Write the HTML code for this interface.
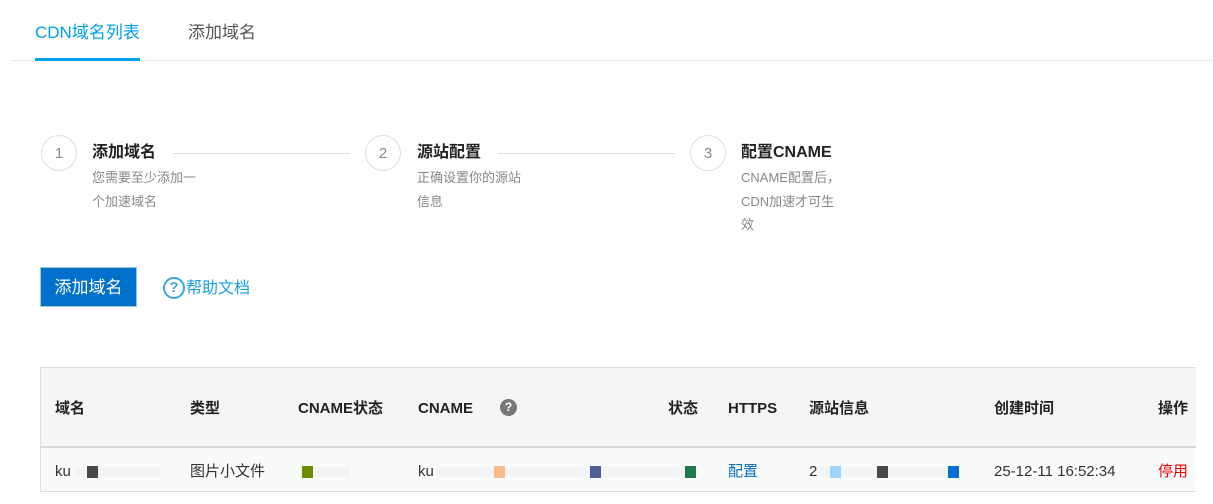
<!DOCTYPE html>
<html><head><meta charset="utf-8"><style>
body{margin:0;width:1213px;height:504px;background:#fff;position:relative;overflow:hidden;font-family:"Liberation Sans","Noto Sans CJK SC",sans-serif;}
.a{position:absolute;white-space:nowrap;line-height:20px;}
.circ{position:absolute;width:36px;height:36px;border:1px solid #ddd;border-radius:50%;box-sizing:border-box;display:flex;align-items:center;justify-content:center;color:#888;font-size:15px;background:#fff}
.t{font-weight:bold;font-size:16px;color:#222;top:143px;}
.d{font-size:13px;color:#888;line-height:23.5px;white-space:normal;width:112px;top:166px;word-break:break-all}
.ln{position:absolute;height:1px;background:#ddd;}
.h{font-weight:bold;font-size:15px;color:#222;top:399px;}
.r{font-size:15px;color:#333;top:462px;}
.sq{position:absolute;width:11px;height:12px;top:466px;}
.bl{position:absolute;height:10px;top:467px;background:#f3f4f6;}
</style></head><body>
<div class="a" style="left:35px;top:23px;font-size:17px;color:#00a0e9">CDN域名列表</div>
<div class="a" style="left:188px;top:23px;font-size:17px;color:#555">添加域名</div>
<div class="ln" style="left:11px;top:60px;width:1202px;background:#e8e8e8"></div>
<div class="a" style="left:35px;top:58px;width:105px;height:3px;background:#00a0e9"></div>

<div class="circ" style="left:41px;top:135px">1</div>
<div class="a t" style="left:92px">添加域名</div>
<div class="ln" style="left:173px;top:153px;width:177px"></div>
<div class="a d" style="left:92px">您需要至少添加一个加速域名</div>

<div class="circ" style="left:365px;top:135px">2</div>
<div class="a t" style="left:417px">源站配置</div>
<div class="ln" style="left:498px;top:153px;width:177px"></div>
<div class="a d" style="left:417px">正确设置你的源站信息</div>

<div class="circ" style="left:690px;top:135px">3</div>
<div class="a t" style="left:741px">配置CNAME</div>
<div class="a d" style="left:741px;width:100px;word-break:normal">CNAME配置后，CDN加速才可生效</div>

<div class="a" style="left:40px;top:267px;width:97px;height:40px;background:#0070cc;border:1px solid #9cc;box-sizing:border-box;color:#fff;font-size:17px;text-align:center;line-height:40px">添加域名</div>
<div class="a" style="left:163px;top:277px;width:22px;height:22px;border:2px solid #3aa8e0;border-radius:50%;box-sizing:border-box;color:#3aa8e0;font-size:15px;font-weight:bold;text-align:center;line-height:18px">?</div>
<div class="a" style="left:186px;top:279px;font-size:16px;color:#1a9ee0">帮助文档</div>

<div class="a" style="left:40px;top:367px;width:1156px;height:80px;background:#f4f5f7;border-top:1px solid #ddd;border-left:1px solid #ddd;box-sizing:border-box"></div>
<div class="a" style="left:40px;top:446px;width:1156px;height:2px;background:#d8d8d8"></div>
<div class="a" style="left:40px;top:448px;width:1156px;height:44px;background:#f9fafa;border-left:1px solid #ddd;border-bottom:1px solid #ddd;box-sizing:border-box"></div>

<div class="a h" style="left:55px">域名</div>
<div class="a h" style="left:190px">类型</div>
<div class="a h" style="left:298px">CNAME状态</div>
<div class="a h" style="left:418px">CNAME</div>
<div class="a" style="left:500px;top:399px;width:17px;height:17px;border-radius:50%;background:#777;color:#fff;font-size:12px;font-weight:bold;text-align:center;line-height:17px">?</div>
<div class="a h" style="left:668px">状态</div>
<div class="a h" style="left:728px">HTTPS</div>
<div class="a h" style="left:809px">源站信息</div>
<div class="a h" style="left:994px">创建时间</div>
<div class="a h" style="left:1158px">操作</div>

<div class="bl" style="left:75px;width:85px"></div>
<div class="sq" style="left:87px;background:#4a4a4a"></div>
<div class="a r" style="left:55px">ku</div>
<div class="a r" style="left:190px">图片小文件</div>
<div class="bl" style="left:300px;width:50px"></div>
<div class="sq" style="left:302px;background:#6b8e00"></div>
<div class="bl" style="left:436px;width:262px"></div>
<div class="a r" style="left:418px">ku</div>
<div class="sq" style="left:494px;background:#f9bd8c"></div>
<div class="sq" style="left:590px;background:#4f5f99"></div>
<div class="sq" style="left:685px;background:#1e7a4a"></div>
<div class="a r" style="left:728px;color:#0a6ebd">配置</div>
<div class="bl" style="left:820px;width:140px"></div>
<div class="a r" style="left:809px">2</div>
<div class="sq" style="left:830px;background:#9dd6ff"></div>
<div class="sq" style="left:877px;background:#4a4a4a"></div>
<div class="sq" style="left:948px;background:#0a6ed0"></div>
<div class="a r" style="left:994px">25-12-11 16:52:34</div>
<div class="a r" style="left:1158px;color:#e00">停用</div>
</body></html>
